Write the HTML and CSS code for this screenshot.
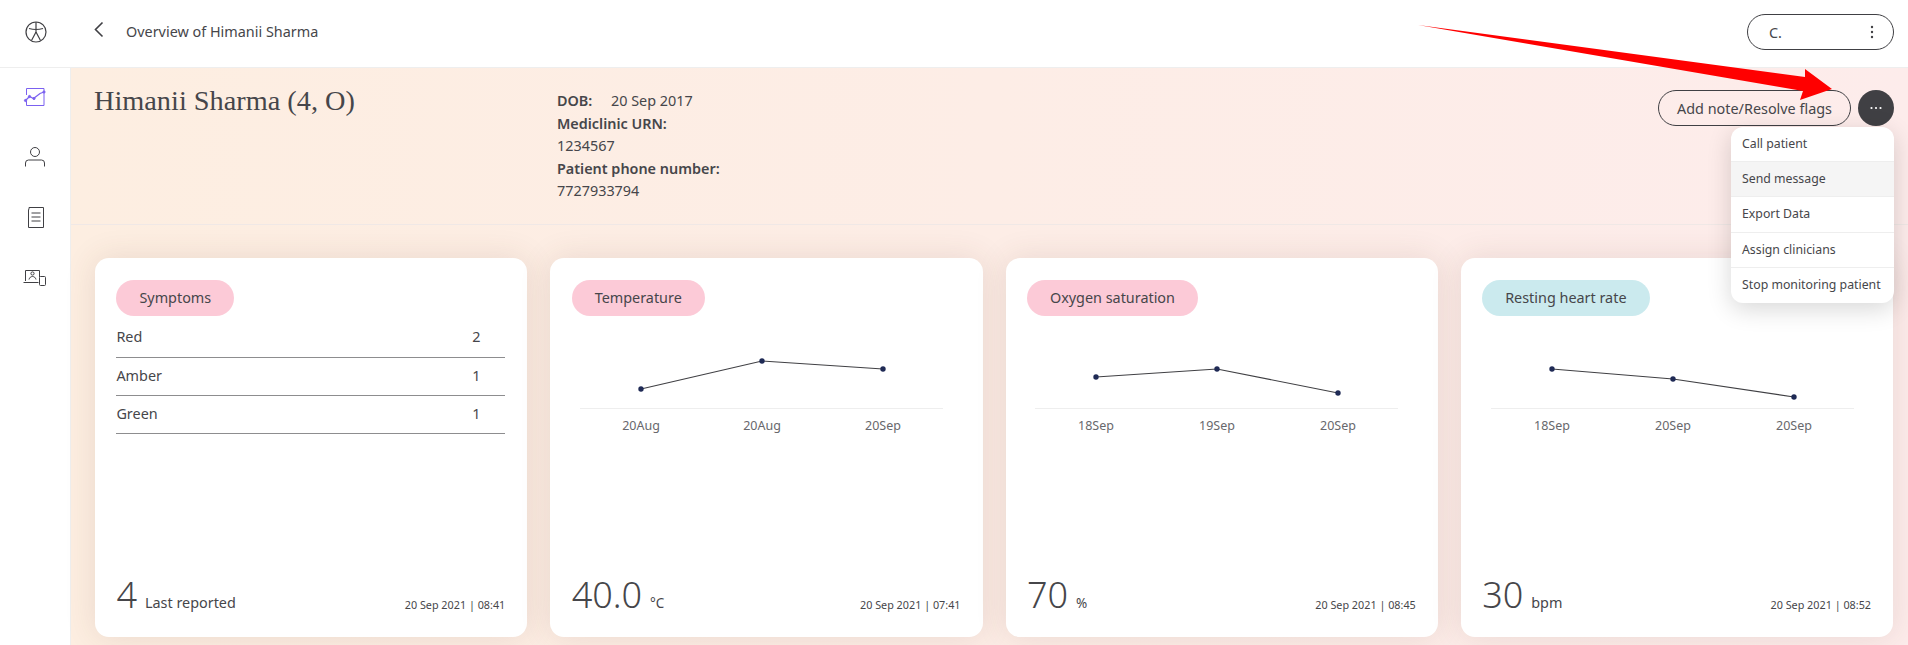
FILE: index.html
```html
<!DOCTYPE html>
<html lang="en">
<head>
  <meta charset="UTF-8" />
  <meta name="viewport" content="width=device-width, initial-scale=1" />
  <title>Overview of Himanii Sharma</title>
  <link rel="stylesheet" href="styles.css">
</head>
<body>

  <header class="topbar">
    <div class="logo-cell">
      <svg width="24" height="24" viewBox="0 0 24 24" fill="none" stroke="#404044" stroke-width="1.2">
        <circle cx="12" cy="12" r="10" />
        <path d="M12 2v10M5 8.500q7 2 14 0M12 12l-4.500 8.500M12 12l4.500 8.500" />
      </svg>
    </div>
    <button class="back" type="button" aria-label="Back">
      <svg width="12" height="18" viewBox="0 0 12 18" fill="none" stroke="#404044" stroke-width="1.6">
        <path d="M9.500 1.500L2.500 8.500l7 7" />
      </svg>
    </button>
    <span class="crumb">Overview of Himanii Sharma</span>
    <div class="user-pill">
      <span>C.</span>
      <svg width="4" height="14" viewBox="0 0 4 14" fill="#404044">
        <circle cx="2" cy="2" r="1.200" /><circle cx="2" cy="7" r="1.200" /><circle cx="2" cy="12" r="1.200" />
      </svg>
    </div>
  </header>

  <div class="layout">
    <nav class="sidebar">
      <svg class="nav-icon" width="24" height="24" viewBox="0 0 24 24" fill="none" stroke="#7b61f0" stroke-width="1">
        <path d="M3.500 10V3.500h17.500v17h-17.500V16" />
        <path d="M2.500 15.500l4-4 4 2 6.500-5 4-1.500" stroke-width="1.300" />
        <circle cx="2.500" cy="15.500" r="1.100" fill="#7b61f0" /><circle cx="6.500" cy="11.500" r="1.100" fill="#7b61f0" /><circle cx="11" cy="13.500" r="1.100" fill="#7b61f0" /><circle cx="21" cy="7" r="1.100" fill="#7b61f0" />
      </svg>
      <svg class="nav-icon" width="24" height="24" viewBox="0 0 24 24" fill="none" stroke="#404044" stroke-width="1">
        <circle cx="12" cy="7" r="4.500" />
        <path d="M2.500 21.500V18a3 3 0 0 1 3-3h13a3 3 0 0 1 3 3v3.500" />
      </svg>
      <svg class="nav-icon" width="24" height="24" viewBox="0 0 24 24" fill="none" stroke="#404044" stroke-width="1">
        <path d="M6 4.500V2.500h14.500v20h-15v-18z" />
        <path d="M8.500 8h9M8.500 12h9M8.500 16h9" />
      </svg>
      <svg class="nav-icon" width="24" height="24" viewBox="0 0 24 24" fill="none" stroke="#404044" stroke-width="1">
        <path d="M2.500 16V5.500h14V12M0.500 17.500h15" />
        <circle cx="9.500" cy="8.500" r="1.600" />
        <path d="M6 14.500c.5-2 1.800-3 3.500-3s3 1 3.500 3" />
        <rect x="16.500" y="11.500" width="6" height="9" rx="1" />
      </svg>
    </nav>

    <main class="content">
      <section class="patient">
        <h1 class="patient-name">Himanii Sharma (4, O)</h1>
        <div class="patient-info">
          <div><b class="dob-label">DOB:</b>20 Sep 2017</div>
          <div><b>Mediclinic URN:</b></div>
          <div>1234567</div>
          <div><b>Patient phone number:</b></div>
          <div>7727933794</div>
        </div>
        <div class="actions">
          <button class="outline-btn" type="button">Add note/Resolve flags</button>
          <button class="more-btn" type="button" aria-label="More">
            <svg width="14" height="4" viewBox="0 0 14 4" fill="#fff">
              <circle cx="2.500" cy="2" r="1.100" /><circle cx="7" cy="2" r="1.100" /><circle cx="11.500" cy="2" r="1.100" />
            </svg>
          </button>
          <ul class="menu">
            <li>Call patient</li>
            <li class="active">Send message</li>
            <li>Export Data</li>
            <li>Assign clinicians</li>
            <li>Stop monitoring patient</li>
          </ul>
        </div>
      </section>

      <section class="cards">
        <article class="card">
          <span class="pill pink">Symptoms</span>
          <table class="symptoms">
            <tr><td>Red</td><td class="count">2</td></tr>
            <tr><td>Amber</td><td class="count">1</td></tr>
            <tr><td>Green</td><td class="count">1</td></tr>
          </table>
          <div class="card-foot">
            <span class="big">4</span><span class="unit">Last reported</span>
            <span class="stamp">20 Sep 2021 | 08:41</span>
          </div>
        </article>

        <article class="card">
          <span class="pill pink">Temperature</span>
          <svg class="chart" width="363" height="95" viewBox="0 0 363 95">
            <line class="axis" x1="0" y1="68.500" x2="363" y2="68.500" />
            <polyline class="trace" points="61,49 182,21 303,29" />
            <circle cx="61" cy="49" r="2.700" /><circle cx="182" cy="21" r="2.700" /><circle cx="303" cy="29" r="2.700" />
            <text x="61" y="90">20Aug</text><text x="182" y="90">20Aug</text><text x="303" y="90">20Sep</text>
          </svg>
          <div class="card-foot">
            <span class="big">40.0</span><span class="unit small">°C</span>
            <span class="stamp">20 Sep 2021 | 07:41</span>
          </div>
        </article>

        <article class="card">
          <span class="pill pink">Oxygen saturation</span>
          <svg class="chart" width="363" height="95" viewBox="0 0 363 95">
            <line class="axis" x1="0" y1="68.500" x2="363" y2="68.500" />
            <polyline class="trace" points="61,37 182,29 303,53" />
            <circle cx="61" cy="37" r="2.700" /><circle cx="182" cy="29" r="2.700" /><circle cx="303" cy="53" r="2.700" />
            <text x="61" y="90">18Sep</text><text x="182" y="90">19Sep</text><text x="303" y="90">20Sep</text>
          </svg>
          <div class="card-foot">
            <span class="big">70</span><span class="unit small">%</span>
            <span class="stamp">20 Sep 2021 | 08:45</span>
          </div>
        </article>

        <article class="card">
          <span class="pill blue">Resting heart rate</span>
          <svg class="chart" width="363" height="95" viewBox="0 0 363 95">
            <line class="axis" x1="0" y1="68.500" x2="363" y2="68.500" />
            <polyline class="trace" points="61,29 182,39 303,57" />
            <circle cx="61" cy="29" r="2.700" /><circle cx="182" cy="39" r="2.700" /><circle cx="303" cy="57" r="2.700" />
            <text x="61" y="90">18Sep</text><text x="182" y="90">20Sep</text><text x="303" y="90">20Sep</text>
          </svg>
          <div class="card-foot">
            <span class="big">30</span><span class="unit">bpm</span>
            <span class="stamp">20 Sep 2021 | 08:52</span>
          </div>
        </article>
      </section>
    </main>
  </div>

  <!-- red annotation arrow drawn over the page -->
  <svg class="annotation" width="1908" height="645" viewBox="0 0 1908 645">
    <polygon points="1418,25 1805,77 1805,69 1832,89 1800,100 1803,91" fill="#ff0000" />
  </svg>

</body>
</html>
```

FILE: styles.css
```css
* {
  box-sizing: border-box;
}
html, body {
  height: 100%;
}
body {
  margin: 0;
  overflow: hidden;
  background: #fff;
  color: #46464a;
  font-family: "Noto Sans", sans-serif;
  font-size: 14.4px;
}
button {
  font-family: inherit;
  color: inherit;
  cursor: pointer;
}

/* top bar */
.topbar {
  height: 68px;
  display: flex;
  align-items: center;
  border-bottom: 1px solid #eeeeee;
  padding: 0 14px 3px 0;
}
.logo-cell {
  width: 71px;
  display: flex;
  justify-content: center;
}
.back {
  width: 40px;
  margin-left: 8px;
  padding: 0;
  border: none;
  background: none;
  text-align: center;
  height: 30px;
}
.crumb {
  margin-left: 7px;
  margin-bottom: 2px;
}
.user-pill {
  margin-left: auto;
  width: 147px;
  height: 36px;
  border: 1px solid #404044;
  border-radius: 18px;
  display: flex;
  align-items: center;
  justify-content: space-between;
  padding: 0 19px 0 21px;
}

/* side nav */
.layout {
  display: flex;
  height: calc(100% - 68px);
}
.sidebar {
  width: 71px;
  flex-shrink: 0;
  border-right: 1px solid #eeeeee;
  display: flex;
  flex-direction: column;
  align-items: center;
  gap: 36px;
  padding-top: 17px;
  background: #fff;
}

.content {
  flex: 1;
  min-width: 0;
  background: linear-gradient(90deg, #fdeee1 0%, #fdeceb 100%);
}

/* patient header */
.patient {
  height: 157px;
  display: flex;
  align-items: flex-start;
  border-bottom: 1px solid #f0e8e6;
  padding: 15px 14px 0 23px;
}
.patient-name {
  width: 463px;
  margin: 0;
  font-family: "Liberation Serif", serif;
  font-size: 28.300px;
  font-weight: 400;
  line-height: 36px;
}
.patient-info {
  line-height: 22.500px;
  padding-top: 7px;
}
.patient-info b {
  font-weight: 600;
}
.dob-label {
  display: inline-block;
  width: 54px;
}
.actions {
  margin-left: auto;
  margin-top: 7px;
  position: relative;
  display: flex;
  gap: 7px;
}
.outline-btn {
  width: 193px;
  height: 36px;
  border: 1px solid #404044;
  border-radius: 18px;
  background: none;
  font-size: 14.400px;
  padding: 0;
}
.more-btn {
  width: 36px;
  height: 36px;
  border: none;
  border-radius: 50%;
  background: #404044;
  padding: 0;
}
.more-btn svg {
  display: block;
  margin: 0 auto;
}
.menu {
  position: absolute;
  top: 37px;
  right: 0;
  z-index: 5;
  width: 163px;
  margin: 0;
  padding: 0;
  list-style: none;
  background: #fff;
  border-radius: 12px;
  overflow: hidden;
  box-shadow: 0 6px 24px rgba(0, 0, 0, 0.16);
  font-size: 12.300px;
}
.menu li {
  height: 35.200px;
  line-height: 33.500px;
  padding-left: 11px;
  border-bottom: 1px solid #eeeeee;
  white-space: nowrap;
}
.menu li:last-child {
  border-bottom: none;
}
.menu li.active {
  background: #f5f5f5;
}

/* cards */
.cards {
  display: grid;
  grid-template-columns: repeat(4, 1fr);
  gap: 23px;
  padding: 33px 15px 0 24px;
}
.card {
  height: 379px;
  background: #fff;
  border-radius: 14px;
  box-shadow: 0 0 32px rgba(90, 60, 40, 0.12);
  padding: 22px 22px 0 21.400px;
  display: flex;
  flex-direction: column;
  align-items: flex-start;
}
.pill {
  height: 36px;
  line-height: 35px;
  padding: 0 23px;
  border-radius: 18px;
}
.pink {
  background: #fccad7;
}
.blue {
  background: #cbeaee;
}
.symptoms {
  width: 100%;
  margin-top: 3px;
  border-collapse: collapse;
}
.symptoms td {
  height: 38px;
  padding: 0 0 2px;
  border-bottom: 1px solid #8d8d8f;
}
.symptoms .count {
  width: 33px;
}
.chart {
  display: block;
  margin: 24px 0 0 8.600px;
}
.chart .axis {
  stroke: #eeeeee;
  stroke-width: 1;
}
.chart .trace {
  fill: none;
  stroke: #404044;
  stroke-width: 1.200;
}
.chart circle {
  fill: #1f2a55;
}
.chart text {
  fill: #68686c;
  font-size: 12.500px;
  text-anchor: middle;
}
.card-foot {
  margin-top: auto;
  margin-bottom: 24px;
  width: 100%;
  display: flex;
  align-items: baseline;
  line-height: 1;
}
.big {
  font-size: 36px;
  font-weight: 300;
}
.unit {
  margin-left: 8px;
}
.unit.small {
  font-size: 13.500px;
}
.stamp {
  align-self: flex-end;
  margin-left: auto;
  margin-bottom: 2.500px;
  font-size: 10.800px;
}

.annotation {
  position: fixed;
  top: 0;
  left: 0;
  z-index: 10;
  pointer-events: none;
}
```
